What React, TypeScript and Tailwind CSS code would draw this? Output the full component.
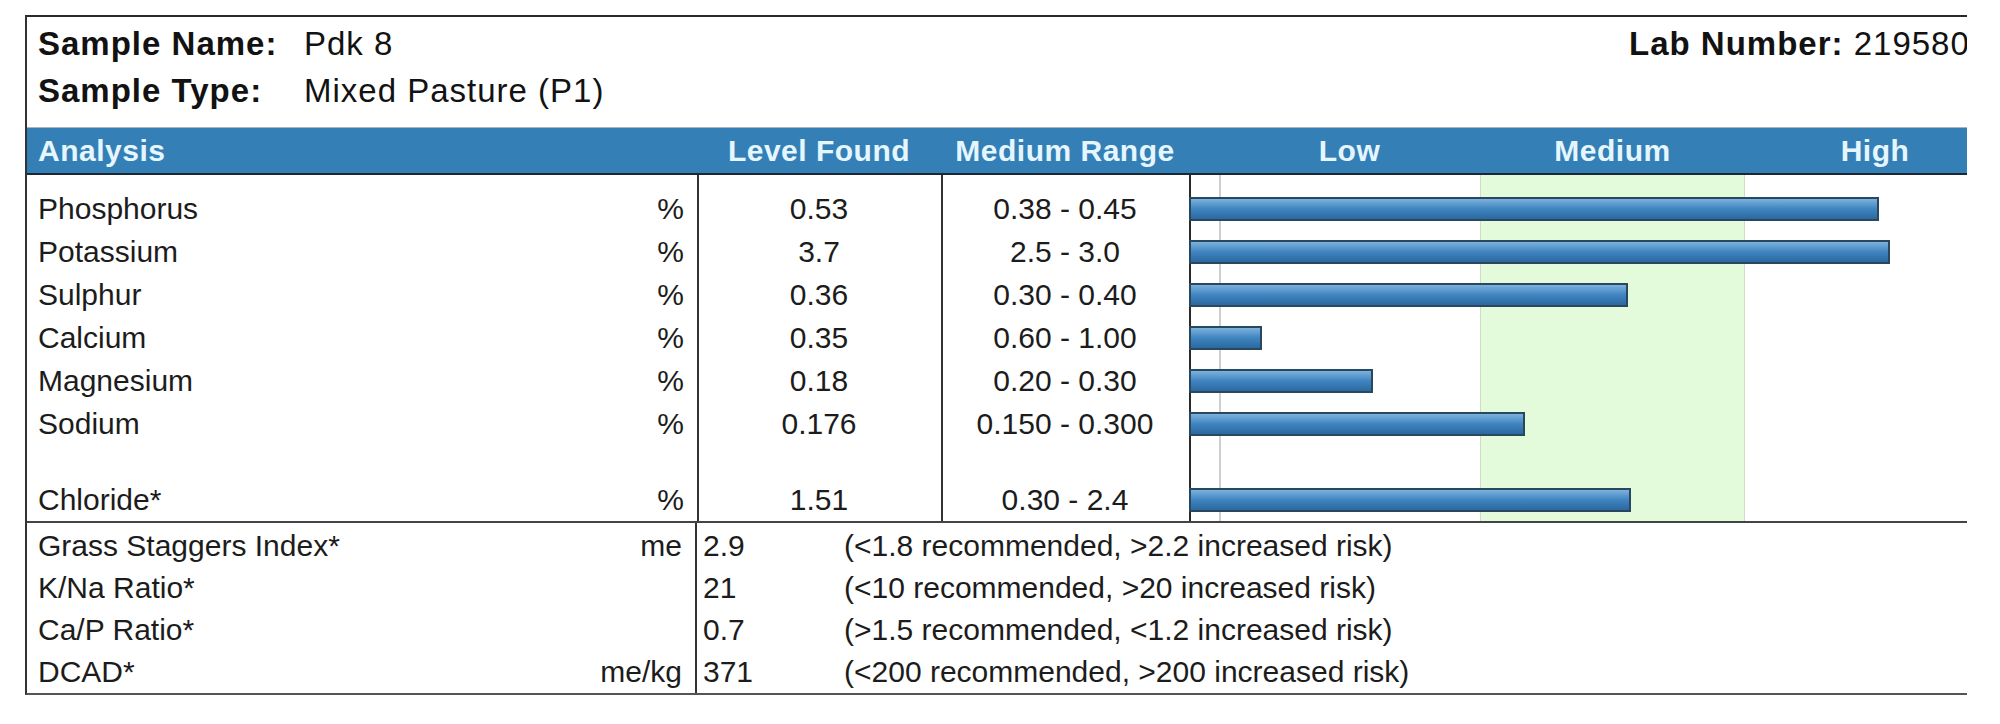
import React from 'react';

interface Nutrient {
  name: string;
  unit: string;
  level: string;
  range: string;
  bar: number;
}

const nutrients: Nutrient[] = [
  { name: 'Phosphorus', unit: '%', level: '0.53', range: '0.38 - 0.45', bar: 690 },
  { name: 'Potassium', unit: '%', level: '3.7', range: '2.5 - 3.0', bar: 701 },
  { name: 'Sulphur', unit: '%', level: '0.36', range: '0.30 - 0.40', bar: 439 },
  { name: 'Calcium', unit: '%', level: '0.35', range: '0.60 - 1.00', bar: 73 },
  { name: 'Magnesium', unit: '%', level: '0.18', range: '0.20 - 0.30', bar: 184 },
  { name: 'Sodium', unit: '%', level: '0.176', range: '0.150 - 0.300', bar: 336 },
];

const chloride: Nutrient = { name: 'Chloride*', unit: '%', level: '1.51', range: '0.30 - 2.4', bar: 442 };

const ratios = [
  { name: 'Grass Staggers Index*', unit: 'me', value: '2.9', note: '(<1.8 recommended, >2.2 increased risk)' },
  { name: 'K/Na Ratio*', unit: '', value: '21', note: '(<10 recommended, >20 increased risk)' },
  { name: 'Ca/P Ratio*', unit: '', value: '0.7', note: '(>1.5 recommended, <1.2 increased risk)' },
  { name: 'DCAD*', unit: 'me/kg', value: '371', note: '(<200 recommended, >200 increased risk)' },
];

function Bar({ width }: { width: number }) {
  return (
    <div
      className="h-[24px] border-2 border-[#2a4760] bg-linear-to-b from-[#7bb2dd] via-[#3f84c0] to-[#2b699f]"
      style={{ width }}
    />
  );
}

function NutrientRow({ n }: { n: Nutrient }) {
  return (
    <div className="flex h-[43px] leading-[43px]">
      <div className="w-[670px] flex justify-between pl-[11px] pr-[13px]">
        <span>{n.name}</span>
        <span>{n.unit}</span>
      </div>
      <div className="w-[244px] text-center">{n.level}</div>
      <div className="w-[248px] text-center">{n.range}</div>
      <div className="flex-1 flex items-center">
        <Bar width={n.bar} />
      </div>
    </div>
  );
}

export default function App() {
  return (
    <div className="w-[2000px] h-[724px] bg-white pt-[15px] pl-[25px] font-['Liberation_Sans',Arial,sans-serif] text-[#1c1c1c]">
      <div className="w-[1942px] overflow-hidden border-l-2 border-t-2 border-b-2 border-l-[#333] border-t-[#2a2a2a] border-b-[#555]">
        {/* Sample info */}
        <div className="flex justify-between pt-[3px] pb-[13px] pl-[11px] text-[33px] leading-[47px] tracking-[1px] text-[#121212]">
          <div>
            <div className="flex">
              <span className="w-[266px] font-bold">Sample Name:</span>
              <span>Pdk 8</span>
            </div>
            <div className="flex">
              <span className="w-[266px] font-bold">Sample Type:</span>
              <span>Mixed Pasture (P1)</span>
            </div>
          </div>
          <div className="whitespace-nowrap w-[338px]">
            <span className="font-bold">Lab Number: </span>
            <span>219580</span>
          </div>
        </div>

        {/* Column header bar */}
        <div className="flex w-[2100px] h-[48px] bg-[#3480b6] border-t border-t-[#a9b4bd] border-b-2 border-b-[#1b2733] text-[30px] font-bold leading-[46px] tracking-[0.5px] text-[#e6f6ff] whitespace-nowrap">
          <div className="w-[670px] pl-[11px]">Analysis</div>
          <div className="w-[244px] text-center">Level Found</div>
          <div className="w-[248px] text-center">Medium Range</div>
          <div className="flex pl-[30px]">
            <div className="w-[261px] text-center">Low</div>
            <div className="w-[265px] text-center">Medium</div>
            <div className="w-[260px] text-center">High</div>
          </div>
        </div>

        {/* Nutrient table */}
        <div className="relative flex w-[2100px] text-[30px] whitespace-nowrap border-b-2 border-b-[#444]">
          <div className="absolute inset-y-0 left-[670px] w-[2px] bg-[#333]" />
          <div className="absolute inset-y-0 left-[914px] w-[2px] bg-[#333]" />
          <div className="absolute inset-y-0 left-[1162px] w-[2px] bg-[#2a2a2a]" />
          <div className="absolute inset-y-0 left-[1192px] w-[2px] bg-[#cfcfcf]" />
          <div className="absolute inset-y-0 left-[1453px] w-[265px] bg-[#e3fadb] border-x border-x-[#cfdcc8]" />
          <div className="relative flex-1 pt-[12px]">
            {nutrients.map((n) => (
              <NutrientRow key={n.name} n={n} />
            ))}
            <div className="h-[33px]" />
            <NutrientRow n={chloride} />
          </div>
        </div>

        {/* Ratios */}
        <div className="flex text-[30px] whitespace-nowrap">
          <div className="w-[670px] pt-[2px] border-r-2 border-r-[#333]">
            {ratios.map((r) => (
              <div key={r.name} className="flex justify-between h-[42px] leading-[42px] pl-[11px] pr-[13px]">
                <span>{r.name}</span>
                <span>{r.unit}</span>
              </div>
            ))}
          </div>
          <div className="pt-[2px]">
            {ratios.map((r) => (
              <div key={r.name} className="flex h-[42px] leading-[42px]">
                <span className="w-[147px] pl-[6px]">{r.value}</span>
                <span>{r.note}</span>
              </div>
            ))}
          </div>
        </div>
      </div>
    </div>
  );
}
